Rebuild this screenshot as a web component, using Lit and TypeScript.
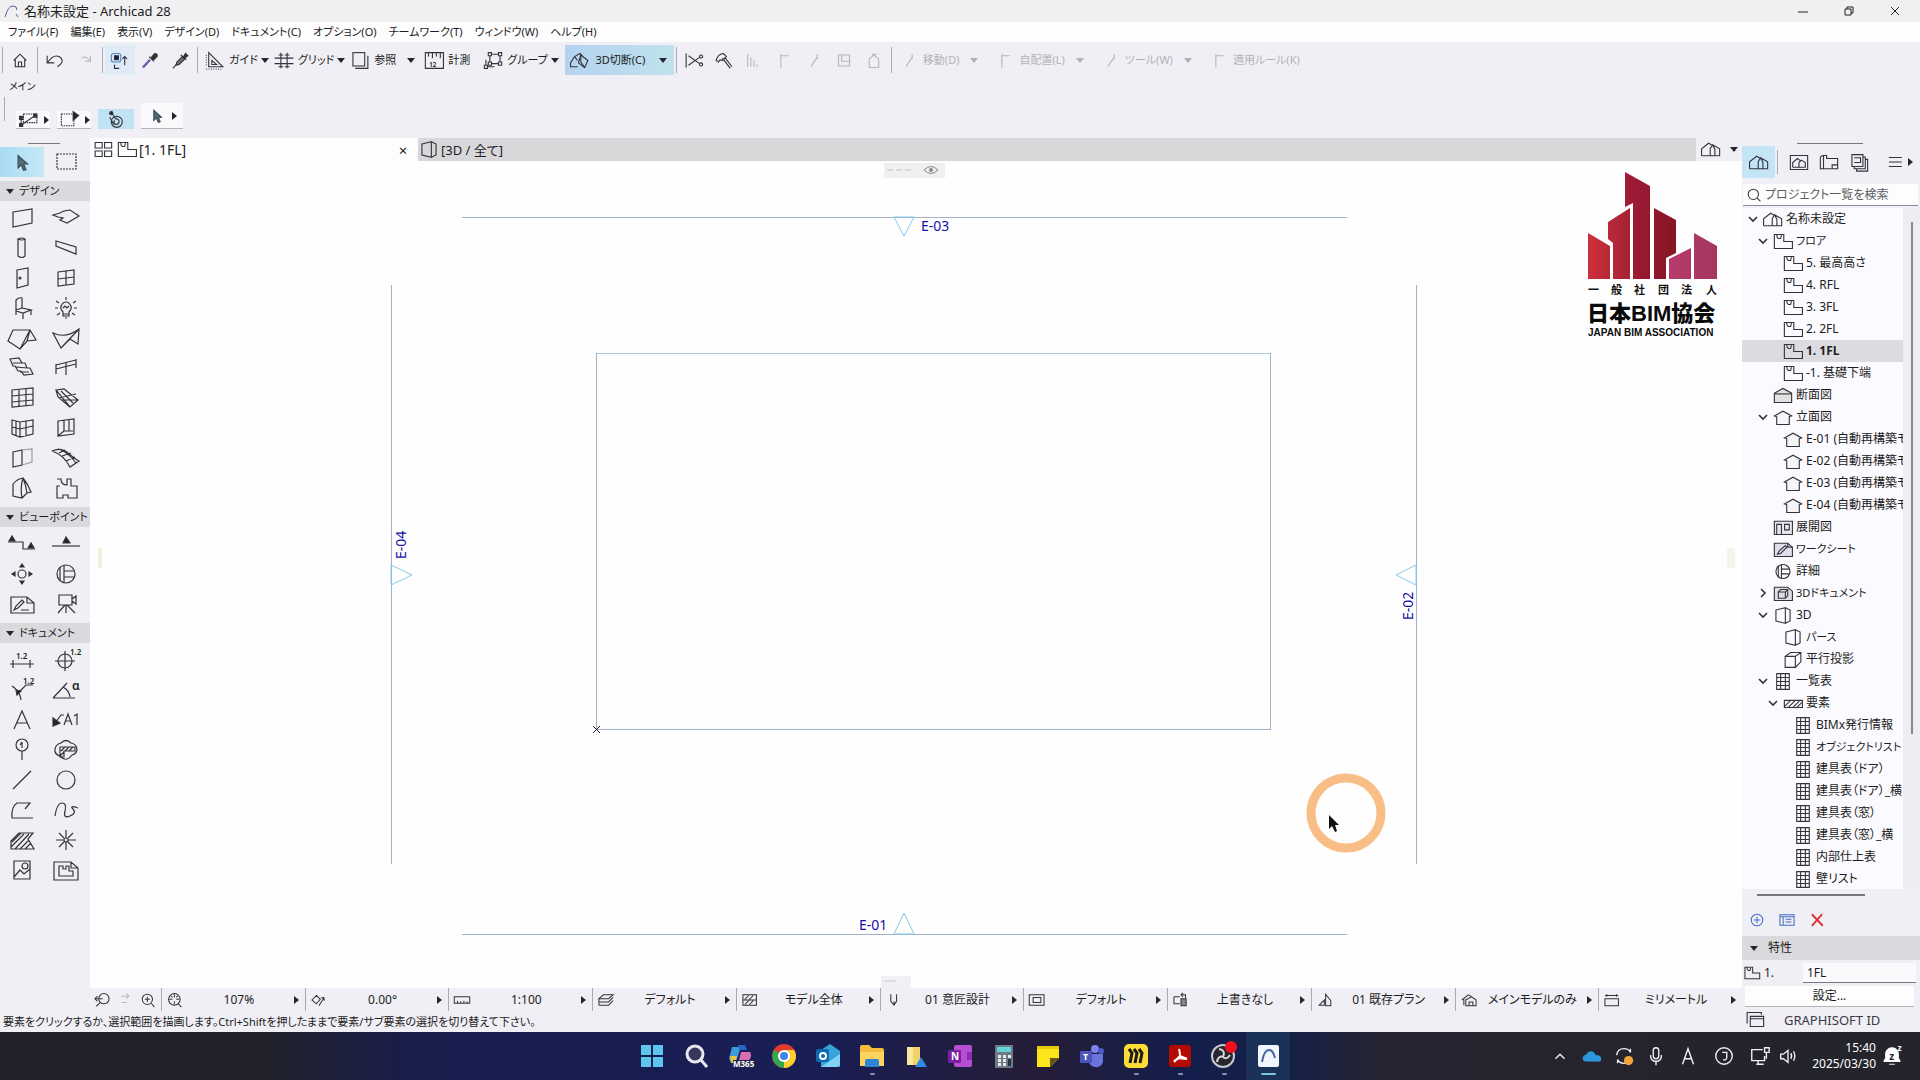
import { LitElement, html, svg, css, nothing } from "lit";
import { customElement } from "lit/decorators.js";
import { classMap } from "lit/directives/class-map.js";

/* ---------- icon drawings, each on a 28 x 24 grid ---------- */
const G: Record<string, unknown> = {
  // toolbox: selection
  arrow: svg`<path d="M9 3v16l4-4 3 7 3-1-3-7h5z" fill="#4d6f78" stroke="#39474e"/>`,
  marquee: svg`<rect x="5" y="4" width="19" height="15" stroke-dasharray="2 1"/>`,
  // toolbox: design
  wall: svg`<path d="M5 6 24 3v14L5 21z"/>`,
  slab: svg`<path d="M1 9l7-2q2-2 10-3l9 6-12 7-7-3 3-2-5-1z"/>`,
  column: svg`<path d="M10 3v17q4 3 7 0V3q-3-2-7 0q4 2 7 0"/>`,
  beam: svg`<path d="M4 5l20 6v7L4 10z"/>`,
  door: svg`<path d="M9 4l11-2v17L9 22z"/><circle cx="12" cy="12" r="1"/>`,
  window: svg`<path d="M6 6l16-2v14L6 20zM14 5v14M6 13l16-2"/>`,
  chair: svg`<path d="M8 15V4q3-3 6-2v10l9 2-8 3-7-2v4M15 17v6M23 14v5M14 12l-6 2"/>`,
  lamp: svg`<path d="M11 16q-3-3-2-6 2-4 5-4t5 4q1 3-2 6v4h-6zM11 12l2-2 2 2 2-2M11 18h6M14 1v3M4 5l3 2M24 5l-3 2M3 12h3M22 12h3M5 19l3-2M23 19l-3-2M13 22h2"/>`,
  roof: svg`<path d="M0 15 5 4h17l6 10-9 1-7 8zM22 4l-3 11M22 4l-10 19"/>`,
  shell: svg`<path d="M1 7q13 6 26-4l-1 15-8-5-9 9zM9 22 27 3"/>`,
  stair: svg`<path d="M2 3l9-1 3 5h3l2 5h3l3 6-9 1-3-4h-3l-3-5H5zM5 7l9 0M8 11l11 1M12 16l9 0"/>`,
  railing: svg`<path d="M4 9 24 4M4 13l20-5M4 8v10M14 6v13M24 3v9"/>`,
  curtain: svg`<path d="M4 4l21-2v17L4 21zM11 3v17M18 3v17M4 10l21-2M4 16l21-2"/>`,
  skylight: svg`<path d="M4 4l8-1 14 11-8 7zM4 4l2 7 12 10M7 12l17-4M10 14l16 0M9 5l12 12"/>`,
  cwall: svg`<path d="M4 4l8 2 13-2v14l-13 3-8-3zM12 6v15M8 5v14M18 5v15M4 11l8 2 13-3"/>`,
  opening: svg`<path d="M6 5l16-2v15L6 20zM12 4v11h9M12 15l-6 5M17 4v11"/>`,
  panel: svg`<path d="M5 6l9-2v15l-9 2z"/><path d="M14 4l10-1v13l-10 3" stroke="#9a9aa2"/>`,
  mesh: svg`<path d="M0 5q9-4 16 2t11 8l-9 6Q12 9 0 5M6 3q9 2 18 14M10 10l9-3M14 15l9-4M7 7l6-3"/>`,
  morph: svg`<path d="M5 8q4-5 10-6 5 6 8 14l-4 1-5 5-9-2zM15 2q-3 10-1 20M15 2q3 7 4 15"/>`,
  zonec: svg`<path d="M5 3h4q0 6 6 6V3h4v7h6v12h-9v-3h-5v3H5V10h3"/>`,
  // toolbox: viewpoint
  section: svg`<path d="M0 10h15v7h12"/><path d="M1 9l3-5 3 5zM20 16l3-5 3 5z" fill="#223"/>`,
  elevation: svg`<path d="M0 14h28"/><path d="M11 11l3-6 4 6z" fill="#223"/>`,
  interior: svg`<circle cx="14" cy="12" r="4"/><path d="M14 2l2 3h-4zM14 22l2-3h-4zM4 12l3-2v4zM24 12l-3-2v4z" fill="#223"/>`,
  detail: svg`<circle cx="14" cy="12" r="9"/><path d="M12 3v18M8 5v14M12 9h10M12 15h10"/>`,
  worksheet: svg`<path d="M3 5h16l7 6v10H3zM19 5v6h7M13 18h8"/><path d="M6 18l2-4 6-6 2 2-6 6z"/>`,
  camera: svg`<path d="M7 3h13v10H7zM20 7l4-3v8l-4-3M14 13v8M13 13l-7 8M15 13l8 8"/>`,
  // toolbox: document
  dim: svg`<path d="M2 16h24M5 12v8M22 12v8"/><text x="8" y="11" class="gt">1.2</text>`,
  level: svg`<circle cx="13" cy="13" r="7"/><path d="M3 13h20M13 3v20"/><text x="18" y="7" class="gt">1.2</text>`,
  radial: svg`<path d="M4 8q8 5 9 14M25 7h-7l-8 8"/><path d="M8 12l5 1-4 4z" fill="#223"/><text x="15" y="6" class="gt">1.2</text>`,
  angle: svg`<path d="M1 20h22M1 20 15 5M11 9q6 3 7 10"/><text x="20" y="12" class="ga">α</text>`,
  text: svg`<path d="M6 21 14 3l8 18M9 15h10"/>`,
  label: svg`<path d="M12 7H9l-6 8"/><path d="M1 10v8l7-3z" fill="#223"/><path d="M12 17l4-11 4 11M13 13h6M22 8l3-2v11"/>`,
  marker: svg`<circle cx="14" cy="7" r="6"/><path d="M14 13v9M14 4v6M12 7l2-3"/>`,
  hatchball: svg`<path d="M9 5q5-5 10 0 6 1 6 7-1 4-5 5-6 8-12 1-6-2-5-7 1-5 6-6z"/><path d="M8 9h15v4H12v6H8zM9 13l4-4M13 13l4-4M17 13l4-4M8 18l4-4"/>`,
  line: svg`<path d="M5 21 23 3"/>`,
  circle: svg`<circle cx="14" cy="12" r="9"/>`,
  poly: svg`<path d="M25 20H4q-1-11 5-15h13l-5 6"/>`,
  spline: svg`<path d="M3 18q2-13 7-13t3 8 5 5 3-7 5-1"/>`,
  fill: svg`<path d="M3 13 11 5h14l-5 6 6 10H3zM3 19 16 6M7 21 21 6M12 21l9-9M17 21l6-6M4 14l9-9"/>`,
  hotspot: svg`<circle cx="14" cy="12" r="2"/><path d="M14 2v8M14 14v8M4 12h8M16 12h8M7 5l5 5M16 14l5 5M21 5l-5 5M12 14l-5 5"/>`,
  figure: svg`<path d="M6 3h16v18H6zM6 19l6-7 4 4 6-5"/><circle cx="17" cy="8" r="3"/>`,
  drawing: svg`<path d="M2 4h17l7 6v12H2zM19 4v6h7M7 8h4v3h3V8h3v5h4v5H7z"/>`,
  // top toolbar
  home: svg`<path d="M6 12l8-8 8 8M8 11v9h12v-9M12 20v-6h4v6"/>`,
  undo: svg`<path d="M4 6v9h9M5 14q7-10 14-7 5 3 4 7-2 4-6 6"/>`,
  redo: svg`<path d="M21 6v7h-7M20 12q-5-7-10-3"/>`,
  finder: svg`<rect x="3" y="3" width="12" height="11" rx="3" stroke="#4f86c4"/><rect x="7" y="6" width="5" height="5" fill="#124"/><path d="M20 18V7M17 10l3-3 3 3M8 18h-1v4h6"/>`,
  dropper: svg`<path d="M5 21l9-10" stroke="#6a59b0" stroke-width="3"/><path d="M13 7l6 6M15 9l5-6q4 0 3 4l-5 5z" fill="#333"/>`,
  syringe: svg`<path d="M5 22l6-7"/><path d="M10 14l7-7 3 3-7 7-4 1z" fill="#777"/><path d="M15 5l7 6M18 8l3-5 3 3-4 3z" fill="#333"/>`,
  guide: svg`<path d="M6 2v18h18zM10 12v5h6z"/><path d="M3 5v15M3 23h20" stroke-dasharray="1 2"/>`,
  grid: svg`<path d="M2 9h24M2 16h24M10 2v20M18 2v20"/><path d="M7 5h6M15 5h6M7 20h6M15 20h6"/>`,
  trace: svg`<rect x="5" y="2" width="15" height="17"/><path d="M8 22h16V6"/>`,
  measure: svg`<path d="M3 2h23v20H3zM7 2v5M12 2v7M17 2v5M22 2v7"/><text x="8" y="20" class="gt">12</text>`,
  group: svg`<path d="M10 4h13v12H10zM5 11v9h11"/><path d="M8 2h4v4H8zM21 2h4v4h-4zM8 14h4v4H8zM21 14h4v4h-4zM3 18h4v4H3z" fill="#f4f4f6"/>`,
  cut3d: svg`<path d="M2 15l5-8 7-4 3 3M2 15v5h9M7 7l4 5"/><path d="M15 5l9 7-4 9-8-6z" fill="#b9d8ee"/><path d="M15 5v9l5 7"/>`,
  scissors: svg`<path d="M4 3v18M7 6l14 10M7 18l14-10"/><circle cx="23" cy="7" r="2"/><circle cx="23" cy="17" r="2"/>`,
  axe: svg`<path d="M12 9l10 13M15 8l9 12"/><path d="M4 12q2-8 9-9l4 4-5 5-3-1-2 3z"/>`,
  g1: svg`<path d="M6 4v16M10 8v12M14 12v8M18 17v3"/>`,
  g2: svg`<path d="M10 4v17M10 6h10"/>`,
  g3: svg`<path d="M10 20l8-12M18 4v6"/>`,
  g4: svg`<path d="M7 5h14v14H7zM11 5v8h10"/>`,
  g5: svg`<path d="M8 10l6-5 6 5v11H8zM11 4h6"/>`,
  // secondary toolbar
  snap: svg`<path d="M7 5h17v11H7z" stroke-dasharray="2 1"/><path d="M4 19V9M4 19 22 7"/><path d="M2 8h4v4H2zM2 17h4v4H2zM20 5h4v4h-4z" fill="#334"/>`,
  sel: svg`<path d="M3 5h16v15H3z" stroke-dasharray="2 1"/><path d="M18 2v11l7-6z" fill="#223"/>`,
  magnet: svg`<circle cx="15" cy="15" r="7"/><path d="M9 4l5 8M14 11q4 0 4 4-1 4-5 3-3-2-1-5M6 9l5 9"/><circle cx="8" cy="4" r="2" fill="#223"/>`,
  // tabs, navigator
  four: svg`<path d="M4 3h9v7H4zM16 3h9v7h-9zM4 14h9v7H4zM16 14h9v7h-9z"/>`,
  story: svg`<path d="M3 3h12v9h11v9H3z"/><path d="M6 3q0 6 5 5l1-4"/>`,
  persp: svg`<path d="M5 5l12-3v20L5 19zM17 2l6 3v14l-6 3"/>`,
  houses: svg`<path d="M2 20v-9l9-7 7 4M2 20h23v-9l-9-5-3 5v9M16 6l3 6v8"/>`,
  viewmap: svg`<path d="M3 3h22v18H3z"/><path d="M6 18v-6l6-5 4 3M6 18h16v-6l-5-3-3 3v6"/>`,
  layout: svg`<path d="M7 20V3Q3 3 3 7v13h22V7H11V3H7M18 20v-5h7"/>`,
  pubs: svg`<path d="M5 2h14v15H5zM8 17v3h14V5h-3M11 20v3h14V8h-3"/><path d="M8 6h8v6H8"/>`,
  burger: svg`<path d="M3 5h20M3 12h20M3 19h20"/>`,
  lens: svg`<circle cx="13" cy="11" r="8"/><path d="M19 17l5 5"/>`,
  sect: svg`<path d="M3 9l11-6 11 6v12H3z" fill="#e4e2e0"/><path d="M3 10h22"/>`,
  elev: svg`<path d="M3 10l11-6 11 6-3 1v10H6V11z" fill="#f6f6f9"/>`,
  inter: svg`<path d="M3 4h23v17H3z" fill="#e6e6ee"/><path d="M6 21V8h6v13M16 8h6v7h-6z"/>`,
  wsheet: svg`<path d="M3 4h17l6 5v12H3z" fill="#dfdfec"/><path d="M7 18l2-4 8-7 2 2-8 8zM20 4v5h6"/>`,
  doc3d: svg`<path d="M3 4h17l6 5v12H3z" fill="#dedee6"/><path d="M8 10h9v8H8zM8 10l3-3h9v8l-3 3M17 10l3-3"/>`,
  cube: svg`<path d="M4 8l7-5h13v12l-7 7H4zM4 8h13v14M17 8l7-5"/>`,
  sheet: svg`<path d="M6 2h16v20H6zM11 2v20M17 2v20M6 7h16M6 12h16M6 17h16"/>`,
  hatch: svg`<path d="M3 8h23v9H3zM3 16l8-8M8 17l9-9M14 17l8-8M19 17l6-6"/>`,
  // quick options
  zoomprev: svg`<circle cx="17" cy="10" r="8"/><path d="M11 16l-6 6M3 10h12M7 6l-4 4 4 4"/>`,
  zoomnext: svg`<path d="M8 6h12M16 2l4 4-4 4M9 16h8" />`,
  zoomin: svg`<circle cx="13" cy="11" r="8"/><path d="M19 17l5 6M13 7v8M9 11h8"/>`,
  fit: svg`<circle cx="13" cy="11" r="9"/><path d="M19 18l5 5M13 3v5M13 14v5M5 11h5M16 11h5M10 8l-2-2M16 8l2-2"/>`,
  orient: svg`<path d="M3 12l7-7 6 6-6 7zM14 21l8-13M22 8v5M22 8l-5 1"/>`,
  scale: svg`<path d="M2 7h24v10H2zM7 17v-4M12 17v-3M17 17v-4M22 17v-3"/>`,
  layers: svg`<path d="M3 10l7-6h15l-7 6zM3 15h15l7-7M3 20h15l7-7M3 10v5M3 15v5"/>`,
  struct: svg`<path d="M3 4h21v16H3zM3 12h21M6 11l6-6M13 11l6-6M6 19l6-6M13 19l6-6"/>`,
  pen: svg`<path d="M9 3v11l5 6 4-6V3M14 14v6"/>`,
  mvo: svg`<path d="M2 4h23v16H2zM8 8h12v8H8z"/>`,
  override: svg`<path d="M3 7h9M3 7v11h9M14 4h7v5M17 1l-3 3 3 3"/><path d="M14 10h8v11h-8z" fill="#888"/>`,
  reno: svg`<path d="M5 20l8-8v8zM15 3l8 10v8h-8z"/>`,
  house2: svg`<path d="M3 12l10-8 5 3M6 20v-9M9 12l9-5 7 5v9H9zM14 21v-6h6v6"/>`,
  dims: svg`<path d="M3 10h21v11H3zM3 5h21M6 3v4M21 3v4"/>`,
  pop: svg`<path d="M4 17V3h18v3M8 8h17v13H8zM8 11h17"/>`,
  plusc: svg`<circle cx="14" cy="12" r="9"/><path d="M14 7v10M9 12h10"/>`,
  form: svg`<path d="M3 4h22v16H3zM3 7h22M8 7v13M12 11h9M12 15h9"/>`,
  cross: svg`<path d="M6 3l17 18M22 3 6 21" stroke-width="3"/>`,
};

const icon = (name: string, size = "m") => html`<svg class="ic ${size}" viewBox="0 0 28 24" aria-hidden="true">${G[name]}</svg>`;

/* ---------- task bar icons, each on a 24 x 24 grid ---------- */
const T: Record<string, unknown> = {
  start: svg`<path d="M1 1h10v10H1zM13 1h10v10H13zM1 13h10v10H1zM13 13h10v10H13z" fill="#5cc6ee"/>`,
  search: svg`<circle cx="11" cy="10" r="8" fill="#37375e" stroke="#e8e6f0" stroke-width="3"/><path d="M17 16l6 7" stroke="#e8e6f0" stroke-width="3"/>`,
  copilot: svg`<path d="M4 3h9l-5 15H3q-3-3-1-7z" fill="#3b9bdc"/><path d="M10 1h7l2 5h-8z" fill="#2467c8"/><path d="M13 8h9q2 3 0 7l-3 5h-9z" fill="#d76fb4"/><path d="M2 12h7l-2 7H3z" fill="#e6c445"/><rect x="5" y="16" width="20" height="8" fill="#222244"/><text x="5" y="23" font-size="8" font-weight="700" fill="#fff">M365</text>`,
  chrome: svg`<circle cx="12" cy="12" r="12" fill="#e33b2e"/><path d="M12 12 2 6a12 12 0 0 0 10 18z" fill="#2da94f"/><path d="M12 12h12a12 12 0 0 1-12 12z" fill="#fccf33"/><path d="M12 6h10a12 12 0 0 1 2 6H12z" fill="#fccf33"/><circle cx="12" cy="12" r="6" fill="#fff"/><circle cx="12" cy="12" r="4" fill="#3f83ee"/>`,
  outlook: svg`<path d="M5 6l9-6 10 7v16H5z" fill="#38a4dc"/><path d="M5 23 24 10v11l-3 2z" fill="#7fd4f5"/><rect x="0" y="5" width="13" height="13" rx="2" fill="#1169b5"/><circle cx="7" cy="12" r="3" fill="none" stroke="#fff" stroke-width="2"/>`,
  folder: svg`<path d="M0 3q0-2 2-2h7l3 3h10q2 0 2 2v15H0z" fill="#f4bb3d"/><path d="M0 8h24v14H0z" fill="#fbd560"/><path d="M5 23v-6q0-2 2-2h10q2 0 2 2v6z" fill="#2c86d4"/>`,
  drive: svg`<path d="M3 3h13v18H3z" fill="#f2d36a"/><path d="M3 3h6v18H3z" fill="#f9e79b"/><path d="M11 23l6-10 6 10z" fill="#2e8be0"/>`,
  onenote: svg`<rect x="6" y="1" width="18" height="22" rx="2" fill="#b44fd4"/><rect x="19" y="8" width="5" height="8" fill="#8a2db0"/><rect x="0" y="6" width="13" height="13" rx="1" fill="#7a1fa2"/><text x="3" y="16" font-size="10" font-weight="700" fill="#fff">N</text>`,
  calc: svg`<rect x="3" y="1" width="18" height="23" rx="1" fill="#707a84"/><rect x="5" y="3" width="14" height="5" fill="#64d4dc"/><path d="M6 11h3v3H6zM11 11h3v3h-3zM16 11h3v3h-3zM6 15h3v3H6zM11 15h3v3h-3zM6 19h3v3H6zM11 19h3v3h-3z" fill="#e8ebee"/><rect x="16" y="15" width="3" height="7" fill="#234"/>`,
  sticky: svg`<path d="M1 2h22v12l-9 9H1z" fill="#fbe51d"/><path d="M14 23v-9h9z" fill="#60521c"/><path d="M1 2h22v3H1z" fill="#e7c80e"/>`,
  teams: svg`<circle cx="15" cy="5" r="4" fill="#7b83eb"/><circle cx="21" cy="7" r="3" fill="#5059c9"/><path d="M9 10h14v8q-2 6-8 5-6-1-6-6z" fill="#6b74dc"/><rect x="0" y="7" width="12" height="12" rx="1" fill="#4b53bc"/><text x="3" y="16" font-size="9" font-weight="700" fill="#fff">T</text>`,
  miro: svg`<rect width="24" height="24" rx="5" fill="#fddc33"/><path d="M5 5l3 4-2 10M10 5l3 4-2 10M15 5l3 4-2 10" fill="none" stroke="#1c1c1e" stroke-width="3"/>`,
  acrobat: svg`<rect x="1" y="1" width="22" height="22" rx="3" fill="#b30b00"/><path d="M11 5q1 3 1 7l-6 6M12 12l7 3M12 12q-2 3 7 3M6 17q5-4 12-3" fill="none" stroke="#fff" stroke-width="2"/>`,
  obs: svg`<circle cx="11" cy="12" r="11" fill="#26262c" stroke="#c9c9d0" stroke-width="2"/><path d="M7 5q7 1 4 8M18 11q-4 6-8 1M5 18q1-7 7-5" fill="none" stroke="#d8d8dc" stroke-width="2"/><circle cx="19" cy="3" r="6" fill="#f3101c"/>`,
  archicad: svg`<rect x="2" y="1" width="21" height="22" rx="2" fill="#f1f6fd"/><path d="M6 18Q8 6 13 6q4 0 6 8" fill="none" stroke="#48669c" stroke-width="2"/>`,
  up: svg`<path d="M7 15l5-5 5 5" class="tw"/>`,
  cloud: svg`<path d="M5 18q-4-1-3-5 1-2 4-3 3-5 8-2l2 3q6 0 6 4t-4 3z" fill="#2b98dc"/>`,
  sync: svg`<path d="M4 11q1-7 8-7 5 0 7 4V4M20 13q-1 6-8 7-5 0-7-4v4" class="tw"/><circle cx="17" cy="17" r="5" fill="#f2a63a"/>`,
  mic: svg`<path d="M9 6q0-3 3-3t3 3v6q0 3-3 3t-3-3zM6 11q0 7 6 7t6-7M12 18v4" class="tw"/>`,
  ime: svg`<path d="M6 21 12 4l6 17M8 15h8" class="tw"/>`,
  jcirc: svg`<circle cx="12" cy="12" r="9" class="tw"/><path d="M10 8h5v5q0 4-4 3" class="tw"/>`,
  net: svg`<path d="M15 5H3v12h14v-5M8 21h8M10 17v4M17 3h5v5h-5zM19 8v7" class="tw"/>`,
  vol: svg`<path d="M4 10h3l5-4v13l-5-4H4zM15 9q2 3 0 6M18 7q3 5 0 10" class="tw"/>`,
  bell: svg`<path d="M3 18l2-4V9q1-6 7-6t7 6v5l2 4zM9 21h6" fill="#fff" stroke="#fff"/><text x="9" y="16" font-size="11" font-weight="700" fill="#223">z</text><text x="18" y="6" font-size="9" font-weight="700" fill="#fff">z</text>`,
};
const tIcon = (name: string) => html`<svg class="ti" viewBox="0 0 24 24" aria-hidden="true">${T[name]}</svg>`;

/* ---------- data ---------- */
const menus = ["ファイル(F)", "編集(E)", "表示(V)", "デザイン(D)", "ドキュメント(C)", "オプション(O)", "チームワーク(T)", "ウィンドウ(W)", "ヘルプ(H)"];

const toolGroups: { title: string; tools: string[] }[] = [
  { title: "デザイン", tools: ["wall", "slab", "column", "beam", "door", "window", "chair", "lamp", "roof", "shell", "stair", "railing", "curtain", "skylight", "cwall", "opening", "panel", "mesh", "morph", "zonec"] },
  { title: "ビューポイント", tools: ["section", "elevation", "interior", "detail", "worksheet", "camera"] },
  { title: "ドキュメント", tools: ["dim", "level", "radial", "angle", "text", "label", "marker", "hatchball", "line", "circle", "poly", "spline", "fill", "hotspot", "figure", "drawing"] },
];

type Node = { l: number; i: string; t: string; c?: "open" | "shut"; sel?: boolean };
const tree: Node[] = [
  { l: 0, i: "houses", t: "名称未設定", c: "open" },
  { l: 1, i: "story", t: "フロア", c: "open" },
  { l: 2, i: "story", t: "5. 最高高さ" },
  { l: 2, i: "story", t: "4. RFL" },
  { l: 2, i: "story", t: "3. 3FL" },
  { l: 2, i: "story", t: "2. 2FL" },
  { l: 2, i: "story", t: "1. 1FL", sel: true },
  { l: 2, i: "story", t: "-1. 基礎下端" },
  { l: 1, i: "sect", t: "断面図" },
  { l: 1, i: "elev", t: "立面図", c: "open" },
  { l: 2, i: "elev", t: "E-01 (自動再構築モデル)" },
  { l: 2, i: "elev", t: "E-02 (自動再構築モデル)" },
  { l: 2, i: "elev", t: "E-03 (自動再構築モデル)" },
  { l: 2, i: "elev", t: "E-04 (自動再構築モデル)" },
  { l: 1, i: "inter", t: "展開図" },
  { l: 1, i: "wsheet", t: "ワークシート" },
  { l: 1, i: "detail", t: "詳細" },
  { l: 1, i: "doc3d", t: "3Dドキュメント", c: "shut" },
  { l: 1, i: "persp", t: "3D", c: "open" },
  { l: 2, i: "persp", t: "パース" },
  { l: 2, i: "cube", t: "平行投影" },
  { l: 1, i: "sheet", t: "一覧表", c: "open" },
  { l: 2, i: "hatch", t: "要素", c: "open" },
  { l: 3, i: "sheet", t: "BIMx発行情報" },
  { l: 3, i: "sheet", t: "オブジェクトリスト" },
  { l: 3, i: "sheet", t: "建具表（ドア）" },
  { l: 3, i: "sheet", t: "建具表（ドア）_横" },
  { l: 3, i: "sheet", t: "建具表（窓）" },
  { l: 3, i: "sheet", t: "建具表（窓）_横" },
  { l: 3, i: "sheet", t: "内部仕上表" },
  { l: 3, i: "sheet", t: "壁リスト" },
];
// labels made of katakana alone are set one size smaller than kanji ones
const katakana = /^(3D)?[ァ-ヶー]+$/;

const quick: [string, string][] = [
  ["fit", "107%"], ["orient", "0.00°"], ["scale", "1:100"], ["layers", "デフォルト"], ["struct", "モデル全体"], ["pen", "01 意匠設計"],
  ["mvo", "デフォルト"], ["override", "上書きなし"], ["reno", "01 既存プラン"], ["house2", "メインモデルのみ"], ["dims", "ミリメートル"],
];

const apps: [string, string][] = [
  ["start", ""], ["search", ""], ["copilot", ""], ["chrome", ""], ["outlook", ""], ["folder", "run"], ["drive", ""], ["onenote", ""],
  ["calc", ""], ["sticky", ""], ["teams", ""], ["miro", "run"], ["acrobat", "run"], ["obs", "run"], ["archicad", "active"],
];

const down = html`<i class="tri down"></i>`;
const right = html`<i class="tri right"></i>`;

@customElement("app-root")
export class AppRoot extends LitElement {
  static styles = css`
    :host { display: flex; flex-direction: column; min-height: 100vh; background: #f0eff5; color: #1c1c22;
      font: 12px/18px "Noto Sans", "Noto Sans CJK JP", sans-serif; }
    * { box-sizing: border-box; }
    button, input { font: inherit; color: inherit; border: 0; background: none; padding: 0; margin: 0; border-radius: 0; }
    button { display: flex; align-items: center; justify-content: center; white-space: nowrap; }
    ul { list-style: none; margin: 0; padding: 0; }
    .kana { font-feature-settings: "palt"; }
    .ic { fill: none; stroke: #33333b; stroke-width: 1.2; flex: none; display: block; overflow: visible; }
    .ic text { stroke: none; fill: #222; font-weight: 600; }
    .gt { font-size: 8px; }
    .ga { font-size: 12px; }
    .ic.m { width: 28px; height: 24px; }
    .ic.s { width: 22px; height: 19px; stroke-width: 1.4; }
    .ic.xs { width: 18px; height: 16px; stroke-width: 1.6; }
    .tri { width: 0; height: 0; flex: none; border: 4px solid transparent; }
    .tri.down { border-top: 5px solid #26262e; border-bottom: 0; }
    .tri.right { border-left: 5px solid #26262e; border-right: 0; }
    .sep { width: 1px; align-self: stretch; background: #a9a9b0; flex: none; }

    /* title and menu */
    .title { display: flex; align-items: center; height: 22px; padding: 0 8px 0 4px; background: #f0f0f2; gap: 4px; }
    .title h1 { font-size: 13px; font-weight: 400; margin: 0; flex: 1; }
    .logo { width: 16px; height: 16px; fill: none; stroke: #5c5c9c; }
    .win { width: 34px; height: 20px; margin-left: 8px; }
    .win svg { width: 10px; height: 10px; fill: none; stroke: #222; }
    .menu { display: flex; height: 20px; align-items: center; background: #fdfdfe; padding-left: 8px; gap: 12px; font-size: 11px; }

    /* toolbars */
    .bar { display: flex; align-items: center; height: 36px; padding-left: 0; }
    .bar .sep { margin: 5px 2px; }
    .bar button { height: 30px; min-width: 30px; }
    .bar .lab { gap: 3px; padding: 0 0 0 4px; font-size: 11px; }
    .bar .plain { margin-right: 8px; }
    .bar .far { margin-right: 4px; }
    .bar .far .tri { margin-left: 8px; }
    .bar .far.dim { margin-right: 12px; }
    .bar .tint { background: #dfeaf7; }
    .bar .on { background: linear-gradient(90deg, #b4d3f0, #bfe2ec); padding: 0 6px 0 4px; margin-left: 6px; gap: 4px; width: 109px; font-size: 11px; }
    .bar .on .tri { margin-left: 10px; }
    .bar .dim { opacity: 0.3; }
    .main-label { padding-left: 9px; height: 17px; font-size: 10px; line-height: 17px; }
    .sub { display: flex; align-items: flex-end; height: 43px; padding: 0 16px 9px 4px; gap: 7px; }
    .sub .grip { width: 1px; height: 24px; background: #a9a9b0; margin: 0 4px 8px 0; }
    .sub button { background: #fafafc; border-bottom: 1px solid #b5b5bc; height: 18px; gap: 4px; width: 34px; }
    .sub .snap-on { background: #bfe3f2; width: 36px; border: 0; height: 20px; }
    .sub .tall { height: 26px; width: 42px; gap: 6px; }

    /* work area */
    .work { flex: 1; display: grid; grid-template-columns: 90px minmax(0, 1fr) 178px; grid-template-rows: 23px minmax(0, 1fr) 23px 21px;
      grid-template-areas: "tools tabs panel" "tools canvas panel" "tools quick panel" "status status panel"; }
    .tools { grid-area: tools; background: #f0f0f4; padding-top: 5px; }
    .tools .handle { width: 32px; height: 1px; background: #77777f; margin: 0 0 3px 28px; }
    .pair { display: grid; grid-template-columns: 44px 44px; grid-auto-rows: 30px; }
    .pair .hot { background: linear-gradient(90deg, #a9dcf3, #c4e8f5); }
    .head { display: flex; align-items: center; gap: 5px; height: 20px; margin: 4px 0 2px; padding-left: 6px; background: #dadade; font-size: 11px; font-weight: 400; white-space: nowrap; }

    .tabs { grid-area: tabs; display: flex; background: #d7d7da; font-size: 14px; }
    .tabs button { height: 23px; }
    .tab { flex: 0 0 328px; display: flex; align-items: center; background: #fdfdfe; }
    .tab .name { flex: 1; justify-content: flex-start; gap: 1px; }
    .tab .four { width: 26px; }
    .tab .close { width: 30px; font-size: 15px; }
    .tab2 { gap: 1px; font-size: 13px; }
    .tabs .pick { margin-left: auto; background: #f0f0f4; width: 46px; gap: 8px; }

    .canvas { grid-area: canvas; background: #fefefe; width: 100%; height: 100%; min-height: 700px; display: block; }
    .ln { fill: none; stroke: #a3b1cc; }
    .rc { fill: #fdfdfe; stroke: #a5cbdc; }
    .mk { fill: none; stroke: #86cbe6; }
    .lb { fill: #1a0fa8; font-size: 14px; }
    .b1 { font-size: 11px; font-weight: 700; fill: #111; }
    .b2 { font-size: 22px; font-weight: 900; fill: #0a0a0a; font-family: "Liberation Sans", "Noto Sans CJK JP", sans-serif; }
    .b3 { font-size: 10px; font-weight: 700; fill: #0a0a0a; font-family: "Liberation Sans", sans-serif; }

    .quick { grid-area: quick; display: flex; align-items: stretch; }
    .zooms { display: flex; flex: 0 0 71px; }
    .zooms button { width: 23px; }
    .zooms .dim { opacity: 0.3; }
    .cells { flex: 1; display: grid; grid-template-columns: repeat(11, minmax(0, 1fr)); }
    .cells button { border-left: 1px solid #a9a9b0; padding: 0 6px 0 4px; }
    .cells span { flex: 1; text-align: center; }
    .status { grid-area: status; padding-left: 3px; line-height: 21px; font-size: 11px; white-space: nowrap; }

    /* navigator */
    .panel { grid-area: panel; display: flex; flex-direction: column; padding-top: 5px; min-width: 0; }
    .panel .handle { width: 66px; height: 1px; background: #77777f; margin: 0 0 0 55px; flex: none; }
    .modes { display: flex; height: 36px; align-items: center; }
    .modes button { width: 30px; height: 32px; }
    .modes .hot { background: #c3e5f5; width: 33px; }
    .modes .sep { margin: 6px 6px 6px 2px; }
    .modes .more { margin-left: auto; gap: 3px; width: 34px; padding-right: 6px; }
    .find { display: flex; align-items: center; background: #fdfdfe; border-bottom: 1px solid #8c8c94; height: 22px; margin: 4px 2px 2px 1px; padding-left: 2px; gap: 2px; }
    .find input { flex: 1; min-width: 0; outline: 0; }
    .find input::placeholder { color: #5c5c64; opacity: 1; }
    .treebox { display: flex; height: 681px; overflow: hidden; }
    .tree { flex: 1; min-width: 0; background: #fbfafe; }
    .tree li { display: flex; align-items: center; height: 22px; white-space: nowrap; overflow: hidden; gap: 2px; }
    .tree li.sel { background: #dcdce0; font-weight: 700; }
    .tree li.small { font-size: 11px; }
    .l0 { padding-left: 4px; } .l1 { padding-left: 14px; } .l2 { padding-left: 24px; } .l3 { padding-left: 34px; }
    .chev { width: 14px; height: 10px; flex: none; fill: none; stroke: #33333b; stroke-width: 1.6; }
    .vscroll { width: 17px; padding: 14px 0 0 8px; background: #eeedf4; }
    .vscroll i { display: block; width: 2px; height: 512px; background: #88888f; }
    .hscroll { width: 108px; height: 2px; margin: 5px 0 0 15px; background: #77777f; flex: none; }
    .acts { display: flex; height: 40px; align-items: center; padding: 8px 0 0; }
    .acts button { width: 30px; }
    .acts .blue .ic { stroke: #3f6fc4; }
    .acts .red .ic { stroke: #d93434; }
    .prop { display: flex; align-items: center; gap: 10px; background: #dadade; height: 24px; padding-left: 8px; font-weight: 400; margin: 0; font-size: 12px; }
    .field { display: flex; align-items: center; height: 24px; margin-top: 1px; padding: 0 4px 0 1px; }
    .field label { display: flex; align-items: center; width: 60px; gap: 3px; }
    .field input { flex: 1; min-width: 0; background: #fafafd; border-bottom: 1px solid #77777f; padding-left: 4px; height: 20px; }
    .set { background: #fdfdfe; border-bottom: 1px solid #b5b5bc; height: 21px; margin: 1px 6px 0 3px; }
    .gid { display: flex; align-items: center; gap: 18px; padding-left: 2px; flex: 1; font-size: 13px; color: #3a3a42; min-height: 24px; }

    /* task bar */
    .task { display: grid; grid-template-columns: 1fr auto 1fr; height: 48px; color: #fff;
      background: linear-gradient(90deg, #202028 0, #21212c 14%, #181d4c 22%, #191e55 42%, #251d38 54%, #141e4c 62%, #152047 67%, #262430 72%, #24242c 100%); }
    .apps { display: flex; grid-column: 2; }
    .apps button { width: 44px; height: 48px; flex-direction: column; }
    .apps button::after { content: ""; width: 5px; height: 2px; margin-top: 5px; margin-bottom: -7px; background: transparent; border-radius: 1px; }
    .apps .run::after { background: #8f93ac; }
    .apps .active { background: #1c3157; }
    .apps .active::after { width: 15px; background: #7cc4e6; }
    .ti { width: 24px; height: 24px; display: block; flex: none; overflow: visible; }
    .tw { fill: none; stroke: #f0f0f4; stroke-width: 1.5; }
    .tray { display: flex; align-items: center; justify-content: flex-end; padding-right: 16px; }
    .tray button { width: 32px; height: 40px; }
    .tray .pad { width: 40px; }
    .tray .slim { width: 24px; }
    .tray .ti { width: 22px; height: 22px; }
    .clock { text-align: right; line-height: 16px; margin: 0 4px 0 10px; width: 66px; }
  `;

  private textBtn(i: string, t: string, cls = "lab", arrow = true) {
    return html`<button class="kana ${cls}" ?disabled=${cls.includes("dim")}>${icon(i, "s")}<span>${t}</span>${arrow ? down : nothing}</button>`;
  }

  private header() {
    return html`
      <header>
        <div class="title">
          <svg class="logo" viewBox="0 0 16 16" aria-hidden="true"><path d="M1 14Q4 3 9 3q4 0 4 4M12 11l2 3" /></svg>
          <h1>名称未設定 - Archicad 28</h1>
          <button class="win" aria-label="最小化"><svg viewBox="0 0 10 10"><path d="M0 6h10" /></svg></button>
          <button class="win" aria-label="元に戻す"><svg viewBox="0 0 10 10"><path d="M1 3h6v6H1zM3 3V1h6v6H7" /></svg></button>
          <button class="win" aria-label="閉じる"><svg viewBox="0 0 10 10"><path d="M1 1l8 8M9 1 1 9" /></svg></button>
        </div>
        <nav class="menu kana">${menus.map((m) => html`<button>${m}</button>`)}</nav>
        <div class="bar">
          <i class="sep"></i>
          <button aria-label="ホーム">${icon("home", "s")}</button>
          <i class="sep"></i>
          <button aria-label="元に戻す">${icon("undo", "s")}</button>
          <button class="dim" aria-label="やり直し" disabled>${icon("redo", "s")}</button>
          <i class="sep"></i>
          <button class="tint" aria-label="検索と選択">${icon("finder", "s")}</button>
          <button aria-label="取得">${icon("dropper", "s")}</button>
          <button aria-label="適用">${icon("syringe", "s")}</button>
          <i class="sep"></i>
          ${this.textBtn("guide", "ガイド")} ${this.textBtn("grid", "グリッド")} ${this.textBtn("trace", "参照", "lab far")}
          ${this.textBtn("measure", "計測", "lab plain", false)} ${this.textBtn("group", "グループ", "lab")}
          ${this.textBtn("cut3d", "3D切断(C)", "on")}
          <i class="sep"></i>
          <button aria-label="切断">${icon("scissors", "s")}</button>
          <button aria-label="分割">${icon("axe", "s")}</button>
          ${["g1", "g2", "g3", "g4", "g5"].map((g) => html`<button class="dim" disabled aria-label="編集">${icon(g, "s")}</button>`)}
          <i class="sep"></i>
          ${this.textBtn("g3", "移動(D)", "lab far dim")} ${this.textBtn("g2", "自配置(L)", "lab far dim")}
          ${this.textBtn("g3", "ツール(W)", "lab far dim")} ${this.textBtn("g2", "適用ルール(K)", "lab dim", false)}
        </div>
        <div class="main-label kana">メイン</div>
        <div class="sub">
          <i class="grip"></i>
          <button aria-label="スナップ">${icon("snap", "s")}${right}</button>
          <button aria-label="選択範囲">${icon("sel", "s")}${right}</button>
          <button class="snap-on" aria-label="マグネット">${icon("magnet", "s")}</button>
          <button class="tall" aria-label="矢印">${icon("arrow", "xs")}${right}</button>
        </div>
      </header>
    `;
  }

  private tools() {
    return html`
      <aside class="tools">
        <div class="handle"></div>
        <div class="pair">
          <button class="hot" aria-label="矢印">${icon("arrow", "s")}</button>
          <button aria-label="矩形選択">${icon("marquee", "m")}</button>
        </div>
        ${toolGroups.map((g) => html`
          <h2 class="head kana">${down}${g.title}</h2>
          <div class="pair">${g.tools.map((t) => html`<button aria-label=${t}>${icon(t)}</button>`)}</div>
        `)}
      </aside>
    `;
  }

  private canvas() {
    return html`
      <svg class="canvas" viewBox="90 161 1652 827" role="img" aria-label="1FL 平面図">
        <rect x="884" y="163" width="61" height="15" fill="#f0f0f0" />
        <path d="M887 170h26" stroke="#c4c4c8" stroke-dasharray="6 3" />
        <path d="M924 170q7-7 14 0-7 7-14 0z" fill="none" stroke="#88888e" /><circle cx="931" cy="170" r="2" fill="#88888e" />
        <rect x="881" y="976" width="30" height="12" fill="#f1f0f6" /><path d="M884 981h12" stroke="#c4c4c8" />
        <rect x="98" y="548" width="4" height="20" fill="#f3f0dc" /><rect x="1727" y="548" width="8" height="20" fill="#f6f3ec" />
        <path class="ln" d="M462 217h885M462 934h885M391 285v579M1416 285v579" shape-rendering="crispEdges" />
        <rect class="rc" x="596" y="353" width="674" height="376" shape-rendering="crispEdges" />
        <path class="ln" d="M596 353v376h674v-376" shape-rendering="crispEdges" />
        <path class="mk" d="M894 217h20l-10 19zM894 934h20l-10-21zM391 565v20l21-10zM1416 565v20l-20-10z" />
        <path d="M593 726l7 7M600 726l-7 7" stroke="#222" />
        <text class="lb" x="921" y="231">E-03</text>
        <text class="lb" x="859" y="930">E-01</text>
        <text class="lb" transform="translate(406 559) rotate(-90)">E-04</text>
        <text class="lb" transform="translate(1413 620) rotate(-90)">E-02</text>
        <circle cx="1346" cy="813" r="35" fill="none" stroke="#f9be85" stroke-width="9" />
        <path d="M1329 815v14l3-3 3 6 2-1-2-6h4z" fill="#111" />
        <defs>
          <linearGradient id="ra" x1="0" x2="1"><stop offset="0" stop-color="#cf2f3d" /><stop offset="1" stop-color="#a32332" /></linearGradient>
          <linearGradient id="rb" x1="0" x2="1"><stop offset="0" stop-color="#a01c38" /><stop offset="1" stop-color="#861523" /></linearGradient>
          <linearGradient id="rc" x1="0" x2="1"><stop offset="0" stop-color="#b83a6c" /><stop offset="1" stop-color="#a3365f" /></linearGradient>
        </defs>
        <path d="M1588 233l22 13v33h-22zM1608 222l22-14v71h-17v-36l-5-4z" fill="url(#ra)" />
        <path d="M1625 172l25 14v93h-17v-76l-8 4zM1654 208l22 12v33l-10 5v21h-12z" fill="url(#rb)" />
        <path d="M1669 259l22-11v31h-22zM1694 233l23 13v33h-23z" fill="url(#rc)" />
        <text class="b1" y="294" x="1588 1611 1634 1658 1681 1706">一般社団法人</text>
        <text class="b2" x="1587" y="321">日本BIM協会</text>
        <text class="b3" x="1588" y="336">JAPAN BIM ASSOCIATION</text>
      </svg>
    `;
  }

  private panel() {
    return html`
      <aside class="panel">
        <div class="handle"></div>
        <div class="modes">
          <button class="hot" aria-label="プロジェクト一覧">${icon("houses", "s")}</button><i class="sep"></i>
          <button aria-label="ビュー一覧">${icon("viewmap", "s")}</button>
          <button aria-label="レイアウトブック">${icon("layout", "s")}</button>
          <button aria-label="発行">${icon("pubs", "s")}</button>
          <button class="more" aria-label="オプション">${icon("burger", "xs")}${right}</button>
        </div>
        <label class="find kana">${icon("lens", "xs")}<input type="search" aria-label="検索" placeholder="プロジェクト一覧を検索" /></label>
        <div class="treebox">
          <ul class="tree kana">
            ${tree.map((n) => html`
              <li class=${classMap({ [`l${n.l}`]: true, sel: !!n.sel, small: katakana.test(n.t) })}>
                <svg class="chev" viewBox="0 0 14 10" aria-hidden="true">${n.c === "open" ? svg`<path d="M3 3l4 4 4-4"/>` : n.c ? svg`<path d="M5 1l4 4-4 4"/>` : nothing}</svg>
                ${icon(n.i, "s")}<span>${n.t}</span>
              </li>`)}
          </ul>
          <div class="vscroll"><i></i></div>
        </div>
        <div class="hscroll"></div>
        <div class="acts">
          <button class="blue" aria-label="追加">${icon("plusc", "xs")}</button>
          <button class="blue" aria-label="設定">${icon("form", "xs")}</button>
          <button class="red" aria-label="削除">${icon("cross", "xs")}</button>
        </div>
        <h2 class="prop">${down}特性</h2>
        <div class="field"><label for="nm">${icon("story", "xs")}1.</label><input id="nm" value="1FL" /></div>
        <button class="set">設定...</button>
        <div class="gid">${icon("pop", "s")}<span>GRAPHISOFT ID</span></div>
      </aside>
    `;
  }

  render() {
    return html`
      ${this.header()}
      <main class="work">
        ${this.tools()}
        <div class="tabs kana">
          <div class="tab">
            <button class="four" aria-label="タブ一覧">${icon("four", "s")}</button>
            <button class="name">${icon("story", "s")}[1. 1FL]</button>
            <button class="close" aria-label="閉じる">×</button>
          </div>
          <button class="tab2">${icon("persp", "s")}[3D / 全て]</button>
          <button class="pick" aria-label="表示切替">${icon("houses", "s")}${down}</button>
        </div>
        ${this.canvas()}
        <div class="quick kana">
          <div class="zooms">
            <button aria-label="前のズーム">${icon("zoomprev", "xs")}</button>
            <button class="dim" disabled aria-label="次のズーム">${icon("zoomnext", "xs")}</button>
            <button aria-label="ズームイン">${icon("zoomin", "xs")}</button>
          </div>
          <div class="cells">${quick.map(([i, t]) => html`<button>${icon(i, "xs")}<span>${t}</span>${right}</button>`)}</div>
        </div>
        <div class="status kana">要素をクリックするか、選択範囲を描画します。Ctrl+Shiftを押したままで要素/サブ要素の選択を切り替えて下さい。</div>
        ${this.panel()}
      </main>
      <footer class="task">
        <div class="apps">${apps.map(([a, c]) => html`<button class=${c} aria-label=${a}>${tIcon(a)}</button>`)}</div>
        <div class="tray">
          ${["up", "cloud", "sync", "mic", "ime"].map((a) => html`<button aria-label=${a}>${tIcon(a)}</button>`)}
          <button class="pad" aria-label="IME">${tIcon("jcirc")}</button>
          <button aria-label="ネットワーク">${tIcon("net")}</button>
          <button class="slim" aria-label="音量">${tIcon("vol")}</button>
          <div class="clock">15:40<br />2025/03/30</div>
          <button class="slim" aria-label="通知">${tIcon("bell")}</button>
        </div>
      </footer>
    `;
  }
}
